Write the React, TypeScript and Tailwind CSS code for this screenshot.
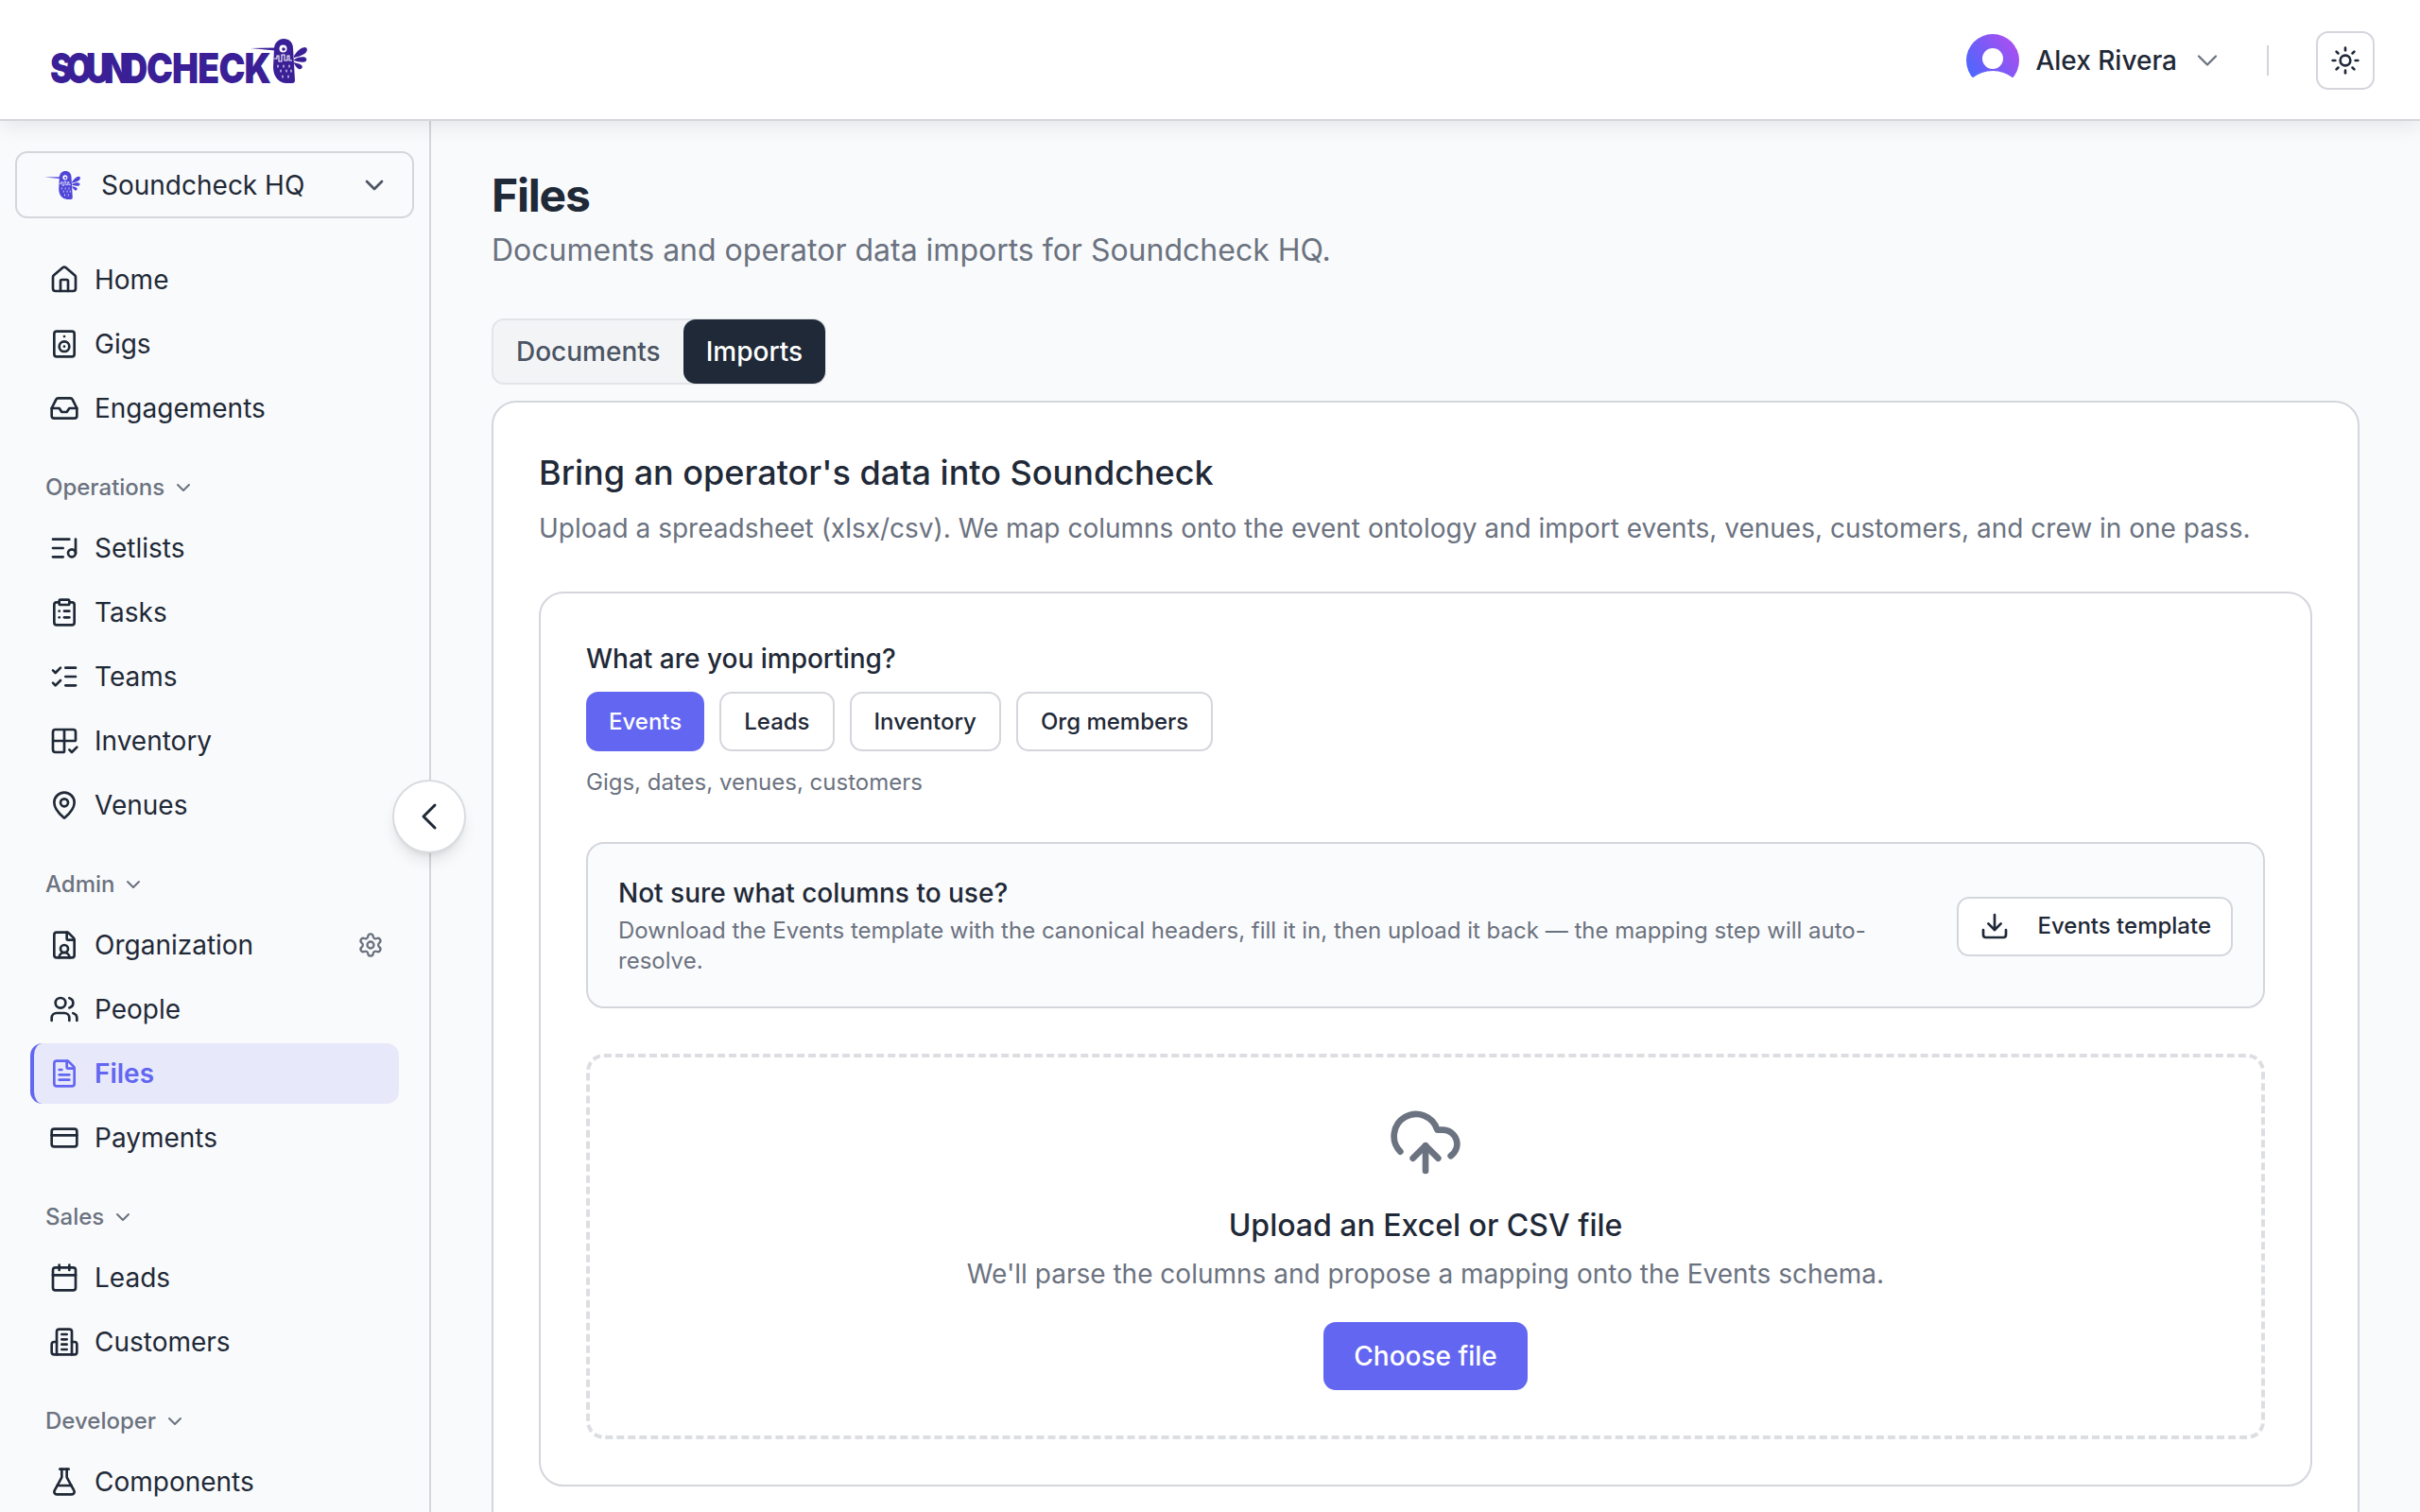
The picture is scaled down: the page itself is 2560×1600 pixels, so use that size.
import {
  House, Speaker, Inbox, ListMusic, ClipboardList, ListChecks, Grid2x2Check, MapPin, FileUser, Users,
  FileText, CreditCard, Calendar, FlaskConical, Settings, Sun, ChevronDown, ChevronLeft, Download, CloudUpload,
} from "lucide-react";

const Bird = ({ className }: { className: string }) => (
  <svg viewBox="0 0 60 47" className={className} fill="currentColor">
    <path d="M0 10 L26 9.5 L26 12.5 Z" />
    <path d="M25 11 C25 4 30 0 35 0 C41 0 45 4 45 10 L47 44 Q47 47 44 47 L38 47 C30 47 24 40 24 30 Z" />
    <path d="M46 18 C50 12 54 9 58 9 C61 10 60 14 57 16 C54 18 50 19 46 20 Z" />
    <path d="M46 22 C50 19.5 54 19 57 19.5 C60 20 60 24 57 24.5 C54 25 50 24.5 46 23 Z" />
    <path d="M46 25 C49 26 52 26.5 54 28 C56 30 54 33 51 32 C49 31 47 28 46 26 Z" />
    <circle cx="34.5" cy="10.5" r="4" fill="#fff" />
    <circle cx="35" cy="11" r="1.8" />
    <path d="M25 21 h3 v-3 h2 v6 h3 v-7 h3 v6 h3 v-5 h2 v5 h3" stroke="#fff" strokeWidth="1.1" fill="none" />
    <g stroke="#fff" strokeWidth="1.1" strokeLinecap="round">
      <path d="M29 28 v2 M35 28 v2 M41 28 v2 M32 33 v2 M38 33 v2 M43 33 v2 M34 39 v2 M40 39 v2" />
    </g>
  </svg>
);

const Avatar = () => (
  <svg viewBox="0 0 56 56" className="w-14 h-14 shrink-0">
    <defs>
      <linearGradient id="avatarGrad" x1="0" y1="1" x2="1" y2="0.3">
        <stop offset="0" stopColor="#3b6bff" />
        <stop offset="1" stopColor="#a94ff0" />
      </linearGradient>
    </defs>
    <circle cx="28" cy="28" r="28" fill="url(#avatarGrad)" />
    <circle cx="28" cy="26" r="11" fill="#fff" />
    <ellipse cx="28" cy="64" rx="30" ry="25" fill="#fff" />
    <rect x="0" y="50" width="56" height="6" fill="#fff" />
  </svg>
);

// the wings on this one are lower than lucide's current Building2
const Customers = ({ size, strokeWidth, className }: { size: number; strokeWidth: number; className?: string }) => (
  <svg width={size} height={size} viewBox="0 0 24 24" fill="none" stroke="currentColor" strokeWidth={strokeWidth} strokeLinecap="round" strokeLinejoin="round" className={className}>
    <path d="M6 22V4a2 2 0 0 1 2-2h8a2 2 0 0 1 2 2v18Z" />
    <path d="M6 12H4a2 2 0 0 0-2 2v6a2 2 0 0 0 2 2h2" />
    <path d="M18 12h2a2 2 0 0 1 2 2v6a2 2 0 0 1-2 2h-2" />
    <path d="M10 6h4" />
    <path d="M10 10h4" />
    <path d="M10 14h4" />
    <path d="M10 18h4" />
  </svg>
);

type Item = { label: string; icon: any; active?: boolean; gear?: boolean };

const groups: { label?: string; items: Item[] }[] = [
  { items: [{ label: "Home", icon: House }, { label: "Gigs", icon: Speaker }, { label: "Engagements", icon: Inbox }] },
  {
    label: "Operations",
    items: [
      { label: "Setlists", icon: ListMusic },
      { label: "Tasks", icon: ClipboardList },
      { label: "Teams", icon: ListChecks },
      { label: "Inventory", icon: Grid2x2Check },
      { label: "Venues", icon: MapPin },
    ],
  },
  {
    label: "Admin",
    items: [
      { label: "Organization", icon: FileUser, gear: true },
      { label: "People", icon: Users },
      { label: "Files", icon: FileText, active: true },
      { label: "Payments", icon: CreditCard },
    ],
  },
  { label: "Sales", items: [{ label: "Leads", icon: Calendar }, { label: "Customers", icon: Customers }] },
  { label: "Developer", items: [{ label: "Components", icon: FlaskConical }] },
];

const NavRow = ({ item }: { item: Item }) => {
  const Icon = item.icon;
  return (
    <div
      className={`h-16 flex items-center gap-4 pr-4 rounded-[13px] ${
        item.active ? "bg-[#e7e9fa] border-l-4 border-[#6366f1] pl-4 text-[#6366f1] font-semibold" : "pl-5 text-[#1f2937]"
      }`}
    >
      <Icon size={32} strokeWidth={2} className="shrink-0" />
      <span className="text-[28px] leading-none flex-1">{item.label}</span>
      {item.gear && <Settings size={28} strokeWidth={2} className="text-[#6b7280]" />}
    </div>
  );
};

const Sidebar = () => (
  <aside className="relative w-[456px] shrink-0 h-full border-r-2 border-[#d4d6dc] bg-[#f9fafb]">
    <div className="px-4 pt-8">
      <div className="h-[71px] w-[422px] flex items-center pl-[30px] pr-[24px] border-2 border-[#d4d6dc] rounded-[13px]">
        <Bird className="w-[38px] h-[30px] text-[#4f46d8] -ml-[1px]" />
        <span className="ml-[22px] text-[28px] text-[#1f2937] flex-1">Soundcheck HQ</span>
        <ChevronDown size={32} className="text-[#4b5563]" />
      </div>
    </div>
    <nav className="mt-[33px] px-8 w-[454px]">
      {groups.map((g, i) => (
        <div key={i} className={i > 0 ? "mt-9" : ""}>
          {g.label && (
            <div className="h-8 mb-4 flex items-center gap-2 pl-4 text-[24px] font-medium text-[#6b7280]">
              {g.label}
              <ChevronDown size={24} />
            </div>
          )}
          <div className="flex flex-col gap-1">
            {g.items.map((it) => (
              <NavRow key={it.label} item={it} />
            ))}
          </div>
        </div>
      ))}
    </nav>
    <button className="absolute top-[697px] left-[415px] w-[78px] h-[78px] rounded-full bg-white border-2 border-[#d9dbe0] shadow-lg flex items-center justify-center text-[#1f2937]">
      <ChevronLeft size={48} strokeWidth={1.5} />
    </button>
  </aside>
);

const Logo = () => (
  <div className="flex items-end text-[#3a1f96] font-black text-[44px] leading-none whitespace-nowrap">
    <span className="block w-[97px] mb-[-6px] origin-left scale-x-[0.8] tracking-[-8px]">SOUND</span>
    <span className="block w-[112px] ml-[5px] mb-[-6px] origin-left scale-x-[0.85] tracking-[-1px]">CHECK</span>
    <Bird className="w-[60px] h-[47px] -ml-[2px]" />
  </div>
);

const Header = () => (
  <header className="relative z-10 h-32 shrink-0 bg-white border-b-2 border-[#d4d6dc] shadow-[0_6px_20px_rgba(0,0,0,0.08)] flex items-center pt-[2px] pl-[53px] pr-[48px]">
    <Logo />
    <div className="ml-auto flex items-center">
      <Avatar />
      <span className="ml-[17px] text-[28px] font-medium text-[#1f2937]">Alex Rivera</span>
      <ChevronDown size={36} strokeWidth={1.5} className="ml-[14px] text-[#6b7280]" />
      <div className="ml-[45px] w-0.5 h-8 bg-[#d1d5db]" />
      <button className="ml-[50px] w-[62px] h-[62px] rounded-[13px] border-2 border-[#d4d6dc] flex items-center justify-center text-[#1f2937]">
        <Sun size={32} strokeWidth={2} />
      </button>
    </div>
  </header>
);

const kinds = ["Events", "Leads", "Inventory", "Org members"];

const Main = () => (
  <main className="flex-1 min-w-0 h-full overflow-hidden bg-[#f9fafb] pl-[64px] pr-[64px] pt-[51px]">
    <h1 className="text-[48px] leading-[56px] font-bold tracking-[-1.2px] text-[#1f2937]">Files</h1>
    <p className="mt-[7px] text-[32px] leading-[46px] text-[#6b7280]">Documents and operator data imports for Soundcheck HQ.</p>

    <div className="mt-[49px] inline-flex h-[70px] border-2 border-[#e2e4e8] bg-[#f3f4f6] rounded-[13px]">
      <div className="px-6 flex items-center text-[28px] font-medium text-[#4b5563]">Documents</div>
      <div className="-my-[1px] -mr-[1px] px-6 flex items-center rounded-[13px] bg-[#1f2937] text-[28px] font-medium text-white">Imports</div>
    </div>

    <section className="mt-[17px] bg-white border-2 border-[#d4d6dc] rounded-[26px] p-12 pt-[47px]">
      <h2 className="text-[36px] leading-[54px] font-medium text-[#1f2937]">Bring an operator's data into Soundcheck</h2>
      <p className="mt-[9px] text-[28px] leading-[46px] text-[#6b7280]">
        Upload a spreadsheet (xlsx/csv). We map columns onto the event ontology and import events, venues, customers, and crew in one pass.
      </p>

      <div className="mt-[44px] border-2 border-[#d4d6dc] rounded-[26px] p-12 pt-[46px]">
        <div className="text-[28px] leading-[46px] font-medium text-[#1f2937]">What are you importing?</div>
        <div className="mt-[12px] flex gap-4">
          {kinds.map((k, i) => (
            <div
              key={k}
              className={`h-[63px] px-6 flex items-center rounded-[13px] text-[24px] font-medium ${
                i === 0 ? "bg-[#6366f1] text-white" : "bg-white border-2 border-[#d4d6dc] text-[#1f2937]"
              }`}
            >
              {k}
            </div>
          ))}
        </div>
        <p className="mt-[14px] text-[24px] leading-[38px] text-[#6b7280]">Gigs, dates, venues, customers</p>

        <div className="mt-[44px] h-[176px] flex items-center justify-between gap-10 bg-[#fafbfc] border-2 border-[#d4d6dc] rounded-[19px] pl-[32px] pr-[32px]">
          <div className="w-[1340px]">
            <div className="text-[28px] leading-[38px] font-medium text-[#1f2937]">Not sure what columns to use?</div>
            <p className="mt-[5px] text-[24px] leading-[32px] text-[#6b7280]">
              Download the Events template with the canonical headers, fill it in, then upload it back — the mapping step will auto-resolve.
            </p>
          </div>
          <button className="mt-[2px] h-[63px] shrink-0 flex items-center gap-[29px] bg-white border-2 border-[#d4d6dc] rounded-[13px] pl-[22px] pr-[21px] text-[24px] font-medium text-[#1f2937]">
            <Download size={32} />
            Events template
          </button>
        </div>

        <div className="mt-[48px] h-[408px] flex flex-col items-center border-4 border-dashed border-[#dcdee2] rounded-[19px] pt-[50px]">
          <CloudUpload size={80} strokeWidth={2} className="text-[#6b7280]" />
          <div className="mt-[24px] text-[32px] leading-[48px] font-medium text-[#1f2937]">Upload an Excel or CSV file</div>
          <p className="mt-[4px] text-[28px] leading-[46px] text-[#6b7280]">We'll parse the columns and propose a mapping onto the Events schema.</p>
          <button className="mt-[28px] h-[72px] px-8 rounded-[13px] bg-[#6366f1] text-[28px] font-medium text-white">Choose file</button>
        </div>
      </div>
    </section>
  </main>
);

const App = () => (
  <div className="h-screen flex flex-col overflow-hidden font-[Inter,sans-serif]">
    <Header />
    <div className="flex flex-1 min-h-0">
      <Sidebar />
      <Main />
    </div>
  </div>
);

export default App;
